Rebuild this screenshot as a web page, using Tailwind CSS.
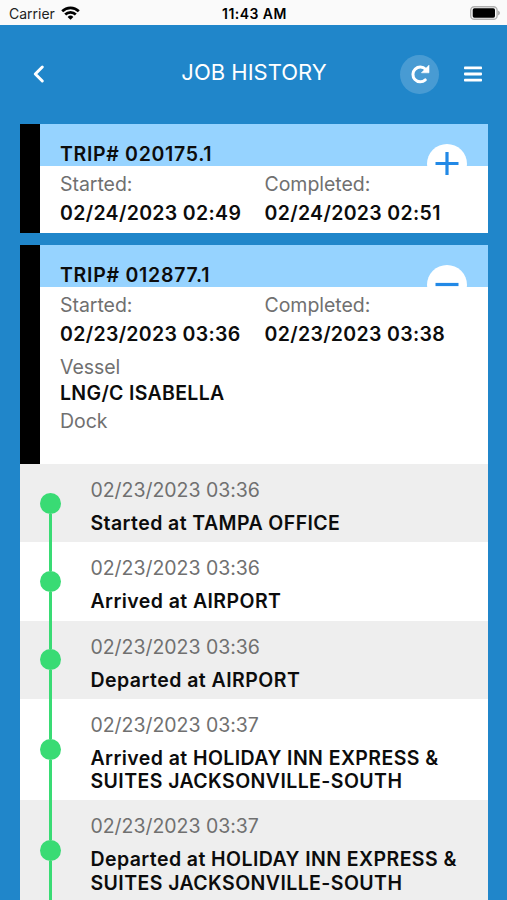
<!DOCTYPE html>
<html lang="en">
<head>
  <meta charset="UTF-8" />
  <meta name="viewport" content="width=device-width, initial-scale=1.0"/>
  <title>Job History</title>
  <script src="https://cdn.jsdelivr.net/npm/@tailwindcss/browser@4"></script>
</head>
<body class="h-[900px] overflow-hidden bg-[#2086ca] font-['Inter','Liberation_Sans',sans-serif] text-[19.5px] leading-[23.25px] tracking-[-0.03px] text-[#0c0c0c]">

  <!-- Status bar -->
  <div class="grid grid-cols-3 items-center h-[25px] bg-[#fafafa] pl-[9px] pr-[7px] pt-[2px] text-[14px] leading-[20px]">
    <div class="flex items-center gap-[6px] tracking-[0px] text-[#222]">
      <span>Carrier</span>
      <svg class="w-[19px] h-[14px] mb-[2px]" viewBox="0 0 19 14" fill="none" stroke="#000" stroke-width="2.7">
        <path d="M1.2 5.2a11.8 11.8 0 0 1 16.6 0"/>
        <path d="M4.2 8.5a7.5 7.5 0 0 1 10.6 0"/>
        <path d="M9.5 13.8 6.6 10.9a4.1 4.1 0 0 1 5.8 0z" fill="#000" stroke="none"/>
      </svg>
    </div>
    <div class="text-center font-semibold tracking-[0.45px] text-black">11:43 AM</div>
    <svg class="w-[30px] h-[14px] justify-self-end mb-[2px]" viewBox="0 0 30 14">
      <rect x="0.7" y="0.7" width="26.4" height="12.6" rx="3.6" fill="#fafafa" stroke="#b0b0b0" stroke-width="1.4"/>
      <rect x="2.7" y="2.3" width="22.3" height="9.4" rx="1.6" fill="#000"/>
      <path d="M27.8 4.5c1.4.4 2.2 1.3 2.2 2.5s-.8 2.1-2.2 2.5z" fill="#b0b0b0"/>
    </svg>
  </div>

  <!-- Header -->
  <header class="flex items-center h-[99px] pl-[32px] pr-[25px] pb-[1px] text-white">
    <svg class="w-[14px] h-[20px]" viewBox="0 0 14 20" fill="none" stroke="#fff" stroke-width="3" stroke-linecap="round" stroke-linejoin="round">
      <path d="M10.3 3 3.3 10l7 7"/>
    </svg>
    <h1 class="flex-1 text-center pl-[62px] pb-[3px] text-[22px] tracking-[0px]">JOB HISTORY</h1>
    <button class="flex items-center justify-center w-[39px] h-[39px] rounded-full bg-white/18">
      <svg class="w-[20px] h-[20px]" viewBox="0 0 20 20" fill="none" stroke="#fff" stroke-width="3">
        <path d="M15.3 15.9A7.4 7.4 0 1 1 15.6 5.2" stroke-linecap="round"/>
        <path d="M19 1.2v7.6h-7.6z" fill="#fff" stroke="#fff" stroke-width="0.6" stroke-linejoin="round"/>
      </svg>
    </button>
    <svg class="w-[18px] h-[16px] ml-[25px]" viewBox="0 0 18 16" fill="#fff">
      <rect width="18" height="2.8" rx="0.8" y="0.4"/>
      <rect width="18" height="2.8" rx="0.8" y="6.6"/>
      <rect width="18" height="2.8" rx="0.8" y="12.8"/>
    </svg>
  </header>

  <main class="flex flex-col gap-[12px] pl-[20.4px] pr-[19.5px]">

    <!-- Collapsed trip -->
    <section class="relative h-[109px] bg-white border-l-[20px] border-black">
      <div class="h-[42px] bg-[#96d3ff] pl-[19.6px] pt-[18.5px] font-semibold tracking-[0.68px]">TRIP# 020175.1</div>
      <button class="absolute right-[20.5px] top-[20px] flex items-center justify-center w-[40px] h-[40px] rounded-full bg-white">
        <svg class="w-[24px] h-[24px]" viewBox="0 0 24 24" stroke="#2289e6" stroke-width="3.2"><path d="M.5 11.5h23M12 0v23"/></svg>
      </button>
      <div class="grid grid-cols-[204.5px_1fr] pl-[19.6px] pt-[7px]">
        <div>
          <p class="text-[#707070]">Started:</p>
          <p class="mt-[6px] font-semibold tracking-[0.34px]">02/24/2023 02:49</p>
        </div>
        <div>
          <p class="text-[#707070]">Completed:</p>
          <p class="mt-[6px] font-semibold tracking-[0.34px]">02/24/2023 02:51</p>
        </div>
      </div>
    </section>

    <!-- Expanded trip -->
    <section>
      <div class="relative h-[219px] bg-white border-l-[20px] border-black">
        <div class="h-[42px] bg-[#96d3ff] pl-[19.6px] pt-[18.5px] font-semibold tracking-[0.74px]">TRIP# 012877.1</div>
        <button class="absolute right-[20.5px] top-[20px] flex items-center justify-center w-[40px] h-[40px] rounded-full bg-white">
          <svg class="w-[24px] h-[24px]" viewBox="0 0 24 24" stroke="#2289e6" stroke-width="3.2"><path d="M.5 11.5h23"/></svg>
        </button>
        <div class="grid grid-cols-[204.5px_1fr] pl-[19.6px] pt-[7px]">
          <div>
            <p class="text-[#707070]">Started:</p>
            <p class="mt-[6px] font-semibold tracking-[0.34px]">02/23/2023 03:36</p>
          </div>
          <div>
            <p class="text-[#707070]">Completed:</p>
            <p class="mt-[6px] font-semibold tracking-[0.34px]">02/23/2023 03:38</p>
          </div>
        </div>
        <div class="pl-[19.6px] pt-[9px]">
          <p class="text-[#707070]">Vessel</p>
          <p class="mt-[3px] font-semibold tracking-[0.32px]">LNG/C ISABELLA</p>
          <p class="mt-[5px] text-[#707070]">Dock</p>
        </div>
      </div>

      <!-- Timeline -->
      <ul>
        <li class="flex h-[78px] bg-[#eeeeee]">
          <div class="flex flex-col items-center w-[21px] ml-[19.6px] mr-[29.5px]">
            <span class="flex-1"></span>
            <span class="w-[21px] h-[21px] rounded-full bg-[#39db74]"></span>
            <span class="flex-1 w-[3px] bg-[#39db74]"></span>
          </div>
          <div class="flex-1 pt-[15px]">
            <p class="text-[#707070]">02/23/2023 03:36</p>
            <p class="mt-[10px] font-semibold tracking-[0.42px]">Started at TAMPA OFFICE</p>
          </div>
        </li>
        <li class="flex h-[78.5px] bg-white">
          <div class="flex flex-col items-center w-[21px] ml-[19.6px] mr-[29.5px]">
            <span class="flex-1 w-[3px] bg-[#39db74]"></span>
            <span class="w-[21px] h-[21px] rounded-full bg-[#39db74]"></span>
            <span class="flex-1 w-[3px] bg-[#39db74]"></span>
          </div>
          <div class="flex-1 pt-[15px]">
            <p class="text-[#707070]">02/23/2023 03:36</p>
            <p class="mt-[10px] font-semibold tracking-[0.42px]">Arrived at AIRPORT</p>
          </div>
        </li>
        <li class="flex h-[78px] bg-[#eeeeee]">
          <div class="flex flex-col items-center w-[21px] ml-[19.6px] mr-[29.5px]">
            <span class="flex-1 w-[3px] bg-[#39db74]"></span>
            <span class="w-[21px] h-[21px] rounded-full bg-[#39db74]"></span>
            <span class="flex-1 w-[3px] bg-[#39db74]"></span>
          </div>
          <div class="flex-1 pt-[15px]">
            <p class="text-[#707070]">02/23/2023 03:36</p>
            <p class="mt-[10px] font-semibold tracking-[0.46px]">Departed at AIRPORT</p>
          </div>
        </li>
        <li class="flex h-[101.5px] bg-white">
          <div class="flex flex-col items-center w-[21px] ml-[19.6px] mr-[29.5px]">
            <span class="flex-1 w-[3px] bg-[#39db74]"></span>
            <span class="w-[21px] h-[21px] rounded-full bg-[#39db74]"></span>
            <span class="flex-1 w-[3px] bg-[#39db74]"></span>
          </div>
          <div class="flex-1 pt-[15px]">
            <p class="text-[#707070]">02/23/2023 03:37</p>
            <p class="mt-[10px] font-semibold tracking-[0.42px] whitespace-nowrap">Arrived at HOLIDAY INN EXPRESS &amp;<br>SUITES JACKSONVILLE-SOUTH</p>
          </div>
        </li>
        <li class="flex h-[101.5px] bg-[#eeeeee]">
          <div class="flex flex-col items-center w-[21px] ml-[19.6px] mr-[29.5px]">
            <span class="flex-1 w-[3px] bg-[#39db74]"></span>
            <span class="w-[21px] h-[21px] rounded-full bg-[#39db74]"></span>
            <span class="flex-1 w-[3px] bg-[#39db74]"></span>
          </div>
          <div class="flex-1 pt-[15px]">
            <p class="text-[#707070]">02/23/2023 03:37</p>
            <p class="mt-[10px] font-semibold tracking-[0.42px] whitespace-nowrap">Departed at HOLIDAY INN EXPRESS &amp;<br>SUITES JACKSONVILLE-SOUTH</p>
          </div>
        </li>
      </ul>
    </section>
  </main>

</body>
</html>
